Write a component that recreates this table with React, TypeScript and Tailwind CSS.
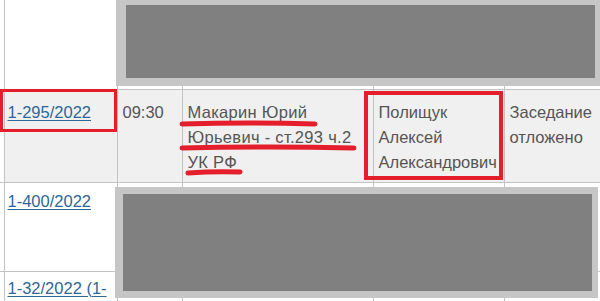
export default function App() {
  const cell = "border border-[#c3c3c3] px-[5px] align-top";
  const first = "border border-[#c3c3c3] pl-[3px] pr-[5px] align-top";
  const link = "text-[#2d6797] underline underline-offset-2 decoration-1";
  return (
    <div className="relative h-[301px] w-[600px] overflow-hidden bg-white font-['Liberation_Sans',Arial,sans-serif] text-[16.5px] leading-[25px] text-[#555555]">
      <table className="w-[612px] table-fixed border-collapse">
        <colgroup>
          <col className="w-[4px]" />
          <col className="w-[113px]" />
          <col className="w-[65px]" />
          <col className="w-[191px]" />
          <col className="w-[131px]" />
          <col className="w-[108px]" />
        </colgroup>
        <tbody>
          <tr className="h-[89px]">
            <td className="border-b border-r border-[#c3c3c3]" />
            <td className={`${first} border-t-0`} />
            <td className={`${cell} border-t-0`} />
            <td className={`${cell} border-t-0`} />
            <td className={`${cell} border-t-0`} />
            <td className={`${cell} border-t-0`} />
          </tr>
          <tr className="h-[93px] bg-[#f0f0f0]">
            <td className="border-b border-r border-[#c3c3c3] bg-white" />
            <td className={`${first} pt-[10px]`}>
              <a href="#" className={link}>1-295/2022</a>
            </td>
            <td className={`${cell} pt-[10px]`}>09:30</td>
            <td className={`${cell} pt-[10px] tracking-[0.3px]`}>
              Макарин Юрий
              <br />
              Юрьевич - ст.293 ч.2
              <br />
              УК РФ
            </td>
            <td className={`${cell} pt-[10px]`}>Полищук Алексей Александрович</td>
            <td className={`${cell} pt-[10px]`}>Заседание отложено</td>
          </tr>
          <tr className="h-[89px]">
            <td className="border-b border-r border-[#c3c3c3]" />
            <td className={`${first} pt-[6px]`}>
              <a href="#" className={link}>1-400/2022</a>
            </td>
            <td className={cell} />
            <td className={cell} />
            <td className={cell} />
            <td className={cell} />
          </tr>
          <tr className="h-[40px]">
            <td className="border-r border-[#c3c3c3]" />
            <td className={`${first} pt-[4px]`}>
              <a href="#" className={link}>1-32/2022 (1-</a>
            </td>
            <td className={cell} />
            <td className={cell} />
            <td className={cell} />
            <td className={cell} />
          </tr>
        </tbody>
      </table>

      {/* redacted blocks */}
      <div className="absolute left-[116px] top-0 h-[86px] w-[484px] bg-[#c6c6c6] pl-[10px] pr-[5px] pt-[5px] pb-[8px]">
        <div className="h-full w-full bg-[#808080]" />
      </div>
      <div className="absolute left-[115px] top-[187px] h-[111px] w-[483px] bg-[#c6c6c6] py-[7px] pl-[8px] pr-[6px]">
        <div className="h-full w-full bg-[#808080]" />
      </div>

      {/* highlight frames */}
      <div className="absolute left-0 top-[89px] h-[43px] w-[117px] border-[3px] border-[#e41f2b]" />
      <div className="absolute left-[364px] top-[91px] h-[89px] w-[139px] border-4 border-[#e41f2b]" />

      {/* underline strokes */}
      <svg className="absolute left-0 top-0" width="600" height="301" viewBox="0 0 600 301">
        <g stroke="#e41f2b" strokeWidth="5" strokeLinecap="round" fill="none">
          <path d="M182 124 Q250 122 315 124" />
          <path d="M182 148 Q270 146 354 148" />
          <path d="M188 173 Q215 171 240 172" />
        </g>
      </svg>
    </div>
  );
}
